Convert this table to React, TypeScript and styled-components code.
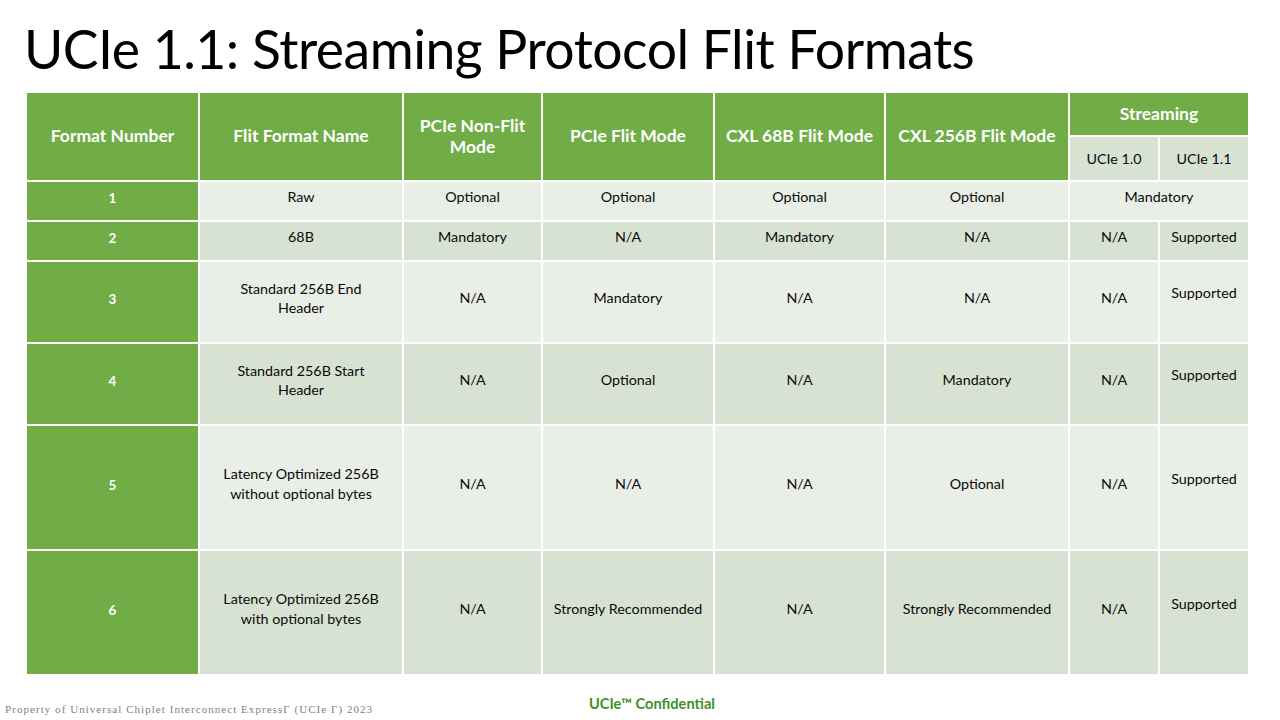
import React from "react";
import styled, { createGlobalStyle } from "styled-components";

const Global = createGlobalStyle`
  html, body { margin: 0; padding: 0; background: #ffffff; }
  body { width: 1280px; height: 720px; overflow: hidden; font-family: Lato, "Open Sans", sans-serif; }
`;

const GREEN = "#70AD47";
const LIGHT = "#E9EEE7";
const DARK = "#D8E2D3";

const Page = styled.div`
  width: 1280px;
  height: 720px;
  display: flex;
  flex-direction: column;
  position: relative;
`;

const Title = styled.h1`
  margin: 0;
  padding: 18px 0 0 24px;
  height: 93px;
  box-sizing: border-box;
  font-family: Lato, sans-serif;
  font-weight: 400;
  font-size: 53.5px;
  line-height: 60px;
  color: #000;
  letter-spacing: -0.5px;
`;

const Grid = styled.div`
  margin-left: 27px;
  width: 1221px;
  display: grid;
  grid-template-columns: 171px 202px 137px 170px 169px 182px 88px 88px;
  grid-template-rows: 42px 43px 38px 38px 80px 80px 123px 123px;
  gap: 2px;
  background: #ffffff;
`;

const Cell = styled.div<{ $bg: string; $span?: number; $rowSpan?: number; $head?: boolean; $lift?: boolean; $light?: boolean }>`
  background: ${(p) => p.$bg};
  grid-column: span ${(p) => p.$span ?? 1};
  grid-row: span ${(p) => p.$rowSpan ?? 1};
  display: flex;
  align-items: center;
  justify-content: center;
  text-align: center;
  color: ${(p) => (p.$light ? "#ffffff" : "#0a0a0a")};
  font-family: Lato, sans-serif;
  font-size: ${(p) => (p.$head ? "17.5px" : "14.3px")};
  font-weight: ${(p) => (p.$head ? 700 : 400)};
  line-height: ${(p) => (p.$head ? "21px" : "19.5px")};
  padding: 0 6px ${(p) => (p.$head ? "2px" : p.$lift ? "18px" : "8px")};
  box-sizing: border-box;
`;

const SubHead = styled(Cell)`
  padding-bottom: 0;
`;

const NumCell = styled(Cell)`
  font-size: 13.5px;
  font-weight: 700;
  padding-bottom: 4px;
`;

const Footer = styled.div`
  flex: 1;
  display: flex;
  align-items: flex-end;
  position: relative;
`;

const Property = styled.div`
  font-family: "Liberation Serif", serif;
  font-size: 11px;
  color: #7f7f7f;
  letter-spacing: 1.05px;
  padding: 0 0 5px 5px;
  white-space: nowrap;
`;

const Confidential = styled.div`
  position: absolute;
  left: 589px;
  bottom: 8px;
  font-family: Lato, sans-serif;
  font-weight: 700;
  font-size: 14.6px;
  color: #3f8f2a;
`;

type Row = { n: string; name: string; cols: string[]; u10?: string; u11?: string; merged?: string; tall?: boolean };

const rows: Row[] = [
  { n: "1", name: "Raw", cols: ["Optional", "Optional", "Optional", "Optional"], merged: "Mandatory" },
  { n: "2", name: "68B", cols: ["Mandatory", "N/A", "Mandatory", "N/A"], u10: "N/A", u11: "Supported" },
  { n: "3", name: "Standard 256B End Header", cols: ["N/A", "Mandatory", "N/A", "N/A"], u10: "N/A", u11: "Supported", tall: true },
  { n: "4", name: "Standard 256B Start Header", cols: ["N/A", "Optional", "N/A", "Mandatory"], u10: "N/A", u11: "Supported", tall: true },
  { n: "5", name: "Latency Optimized 256B without optional bytes", cols: ["N/A", "N/A", "N/A", "Optional"], u10: "N/A", u11: "Supported", tall: true },
  { n: "6", name: "Latency Optimized 256B with optional bytes", cols: ["N/A", "Strongly Recommended", "N/A", "Strongly Recommended"], u10: "N/A", u11: "Supported", tall: true },
];

const NameText = styled.span<{ $w: number }>`
  display: block;
  max-width: ${(p) => p.$w}px;
`;

export default function App() {
  return (
    <Page>
      <Global />
      <Title>UCIe 1.1: Streaming Protocol Flit Formats</Title>
      <Grid>
        <Cell $bg={GREEN} $rowSpan={2} $head $light>Format Number</Cell>
        <Cell $bg={GREEN} $rowSpan={2} $head $light>Flit Format Name</Cell>
        <Cell $bg={GREEN} $rowSpan={2} $head $light>PCIe Non-Flit Mode</Cell>
        <Cell $bg={GREEN} $rowSpan={2} $head $light>PCIe Flit Mode</Cell>
        <Cell $bg={GREEN} $rowSpan={2} $head $light>CXL 68B Flit Mode</Cell>
        <Cell $bg={GREEN} $rowSpan={2} $head $light>CXL 256B Flit Mode</Cell>
        <Cell $bg={GREEN} $span={2} $head $light>Streaming</Cell>
        <SubHead $bg={DARK}>UCIe 1.0</SubHead>
        <SubHead $bg={DARK}>UCIe 1.1</SubHead>
        {rows.map((r, i) => {
          const bg = i % 2 === 0 ? LIGHT : DARK;
          return (
            <React.Fragment key={r.n}>
              <NumCell $bg={GREEN} $light>{r.n}</NumCell>
              <Cell $bg={bg}>
                <NameText $w={165}>{r.name}</NameText>
              </Cell>
              {r.cols.map((c, j) => (
                <Cell key={j} $bg={bg}>{c}</Cell>
              ))}
              {r.merged ? (
                <Cell $bg={bg} $span={2}>{r.merged}</Cell>
              ) : (
                <>
                  <Cell $bg={bg}>{r.u10}</Cell>
                  <Cell $bg={bg} $lift={r.tall}>{r.u11}</Cell>
                </>
              )}
            </React.Fragment>
          );
        })}
      </Grid>
      <Footer>
        <Property>Property of Universal Chiplet Interconnect ExpressΓ (UCIe Γ) 2023</Property>
        <Confidential>UCIe™ Confidential</Confidential>
      </Footer>
    </Page>
  );
}
